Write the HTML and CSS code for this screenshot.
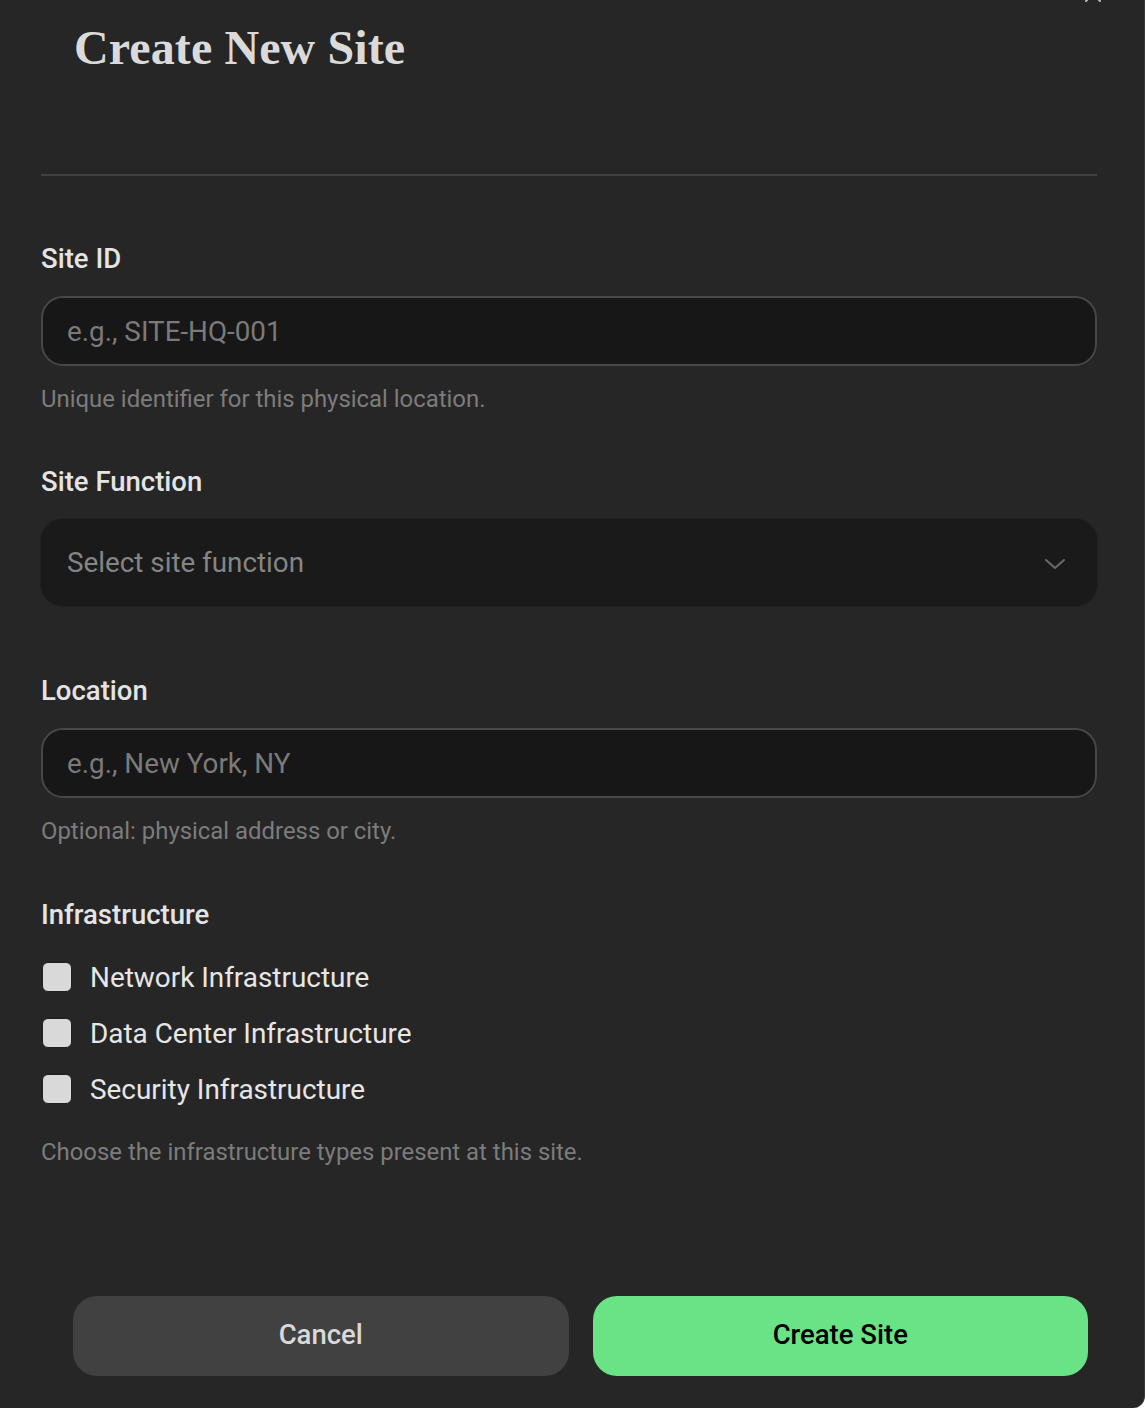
FILE: index.html
```html
<!DOCTYPE html>
<html lang="en">
<head>
<meta charset="utf-8">
<title>Create New Site</title>
<link rel="stylesheet" href="styles.css">
</head>
<body>
<div class="dialog">
  <svg class="close" width="18" height="18" viewBox="0 0 18 18" aria-hidden="true">
    <path d="M2 2 L16 16 M16 2 L2 16" stroke="#bdbdbd" stroke-width="2" stroke-linecap="round" fill="none"/>
  </svg>
  <header class="dialog-header">
    <h1 class="title">Create New Site</h1>
  </header>
  <hr class="divider">
  <form class="form">
    <div class="field field-first">
      <label class="label">Site ID</label>
      <div class="input"><span class="placeholder">e.g., SITE-HQ-001</span></div>
      <p class="help">Unique identifier for this physical location.</p>
    </div>
    <div class="field field-select">
      <label class="label">Site Function</label>
      <div class="select">
        <span class="placeholder">Select site function</span>
        <svg class="chevron" width="22" height="12" viewBox="0 0 22 12" aria-hidden="true">
          <path d="M2 2 L11 10 L20 2" stroke="#6a6a6a" stroke-width="2" fill="none" stroke-linecap="round" stroke-linejoin="round"/>
        </svg>
      </div>
    </div>
    <div class="field field-location">
      <label class="label">Location</label>
      <div class="input"><span class="placeholder">e.g., New York, NY</span></div>
      <p class="help">Optional: physical address or city.</p>
    </div>
    <div class="field field-infra">
      <label class="label">Infrastructure</label>
      <div class="checks">
        <div class="check"><span class="box"></span><span class="check-text">Network Infrastructure</span></div>
        <div class="check"><span class="box"></span><span class="check-text">Data Center Infrastructure</span></div>
        <div class="check"><span class="box"></span><span class="check-text">Security Infrastructure</span></div>
      </div>
      <p class="help help-infra">Choose the infrastructure types present at this site.</p>
    </div>
  </form>
  <footer class="actions">
    <button class="btn btn-cancel" type="button">Cancel</button>
    <button class="btn btn-create" type="button">Create Site</button>
  </footer>
</div>
</body>
</html>
```

FILE: styles.css
```css
html, body {
  margin: 0;
  padding: 0;
  background: #ffffff;
}

body {
  font-family: Roboto, "Liberation Sans", Arial, sans-serif;
  overflow: hidden;
}

.dialog {
  position: relative;
  box-sizing: border-box;
  width: 1145px;
  height: 1408px;
  background: #262626;
  border-right: 1px solid #3a3a3a;
  border-bottom-right-radius: 12px;
  overflow: hidden;
  display: flex;
  flex-direction: column;
}

.close {
  position: absolute;
  top: -15px;
  left: 1084px;
}

.dialog-header {
  padding: 20px 0 0 74px;
  height: 174px;
  box-sizing: border-box;
  flex: none;
}

.title {
  margin: 0;
  font-family: "Liberation Serif", "Times New Roman", serif;
  font-weight: 700;
  font-size: 48px;
  line-height: 56px;
  color: #dadada;
  letter-spacing: 0.1px;
}

.divider {
  margin: 0 47px 0 41px;
  border: 0;
  height: 2px;
  background: #404040;
  flex: none;
}

.form {
  padding: 0 47px 0 41px;
  display: flex;
  flex-direction: column;
}

.field {
  display: flex;
  flex-direction: column;
}

.field-first { margin-top: 66px; }
.field-select { margin-top: 51px; }
.field-location { margin-top: 68px; }
.field-infra { margin-top: 52px; }

.label {
  font-size: 27.5px;
  line-height: 33px;
  font-weight: 500;
  color: #e4e4e4;
}

.input {
  margin-top: 21px;
  height: 70px;
  box-sizing: border-box;
  border: 2px solid #474747;
  border-radius: 22px;
  background: #171717;
  display: flex;
  align-items: center;
  padding-left: 24px;
}

.placeholder {
  font-size: 27.8px;
  color: #7a7a7a;
}

.select {
  margin-top: 21px;
  height: 87px;
  box-sizing: border-box;
  border-radius: 22px;
  background: #1a1a1a;
  box-shadow: 0 0 0 1px #202020;
  display: flex;
  align-items: center;
  justify-content: space-between;
  padding: 0 31px 0 26px;
}

.select .placeholder {
  color: #858585;
}

.chevron {
  margin-top: 2px;
}

.help {
  margin: 18px 0 0;
  font-size: 23.9px;
  line-height: 30px;
  color: #7c7c7c;
}

.checks {
  margin-top: 18px;
  display: flex;
  flex-direction: column;
}

.check {
  height: 56px;
  display: flex;
  align-items: center;
}

.box {
  width: 28px;
  height: 28px;
  margin-left: 1px;
  border: 1px solid #1e1e1e;
  border-radius: 6px;
  background: #d9d9d9;
  flex: none;
}

.check-text {
  margin-left: 18px;
  font-size: 27.9px;
  color: #e6e6e6;
}

.help-infra {
  margin-top: 20px;
}

.actions {
  margin-top: auto;
  margin-bottom: 32px;
  display: flex;
  gap: 24px;
  padding: 0 56px 0 73px;
}

.btn {
  flex: 1;
  height: 80px;
  padding: 0 0 3px;
  border: 0;
  border-radius: 24px;
  font-family: Roboto, "Liberation Sans", Arial, sans-serif;
  font-size: 27.5px;
  font-weight: 500;
  cursor: pointer;
}

.btn-cancel {
  background: #414141;
  color: #d9d9d9;
}

.btn-create {
  background: #69e385;
  color: #000000;
}
```
